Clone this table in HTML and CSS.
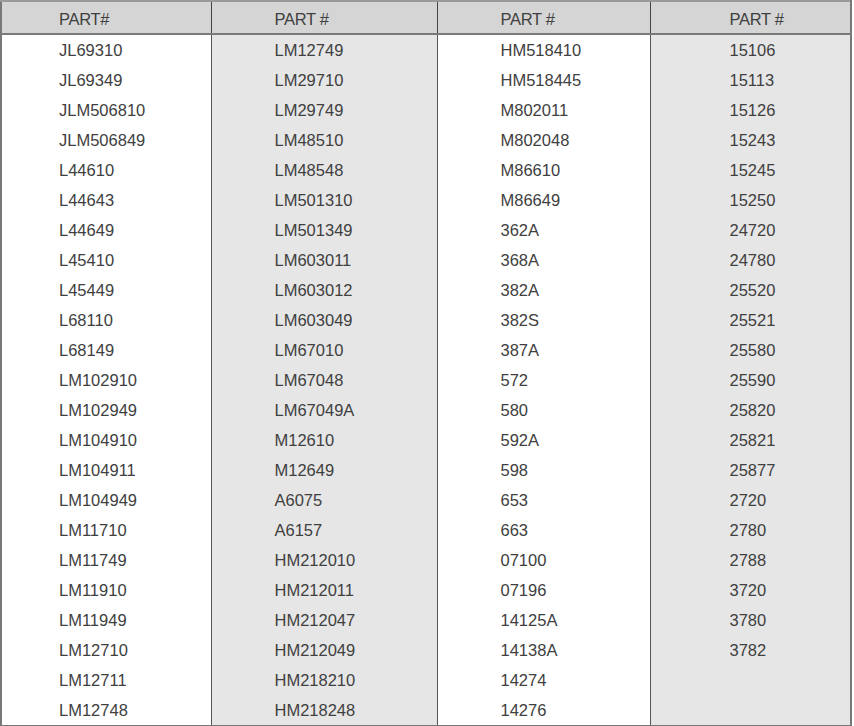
FILE: index.html
```html
<!DOCTYPE html>
<html>
<head>
<meta charset="utf-8">
<link rel="stylesheet" href="styles.css">
</head>
<body>
<table class="parts">
<colgroup>
<col class="c1"><col class="c2"><col class="c3"><col class="c4">
</colgroup>
<thead>
<tr><th class="p1">PART#</th><th class="p2">PART #</th><th class="p3">PART #</th><th class="p4">PART #</th></tr>
</thead>
<tbody>
<tr><td class="p1">JL69310</td><td class="p2 g">LM12749</td><td class="p3">HM518410</td><td class="p4 g">15106</td></tr>
<tr><td class="p1">JL69349</td><td class="p2 g">LM29710</td><td class="p3">HM518445</td><td class="p4 g">15113</td></tr>
<tr><td class="p1">JLM506810</td><td class="p2 g">LM29749</td><td class="p3">M802011</td><td class="p4 g">15126</td></tr>
<tr><td class="p1">JLM506849</td><td class="p2 g">LM48510</td><td class="p3">M802048</td><td class="p4 g">15243</td></tr>
<tr><td class="p1">L44610</td><td class="p2 g">LM48548</td><td class="p3">M86610</td><td class="p4 g">15245</td></tr>
<tr><td class="p1">L44643</td><td class="p2 g">LM501310</td><td class="p3">M86649</td><td class="p4 g">15250</td></tr>
<tr><td class="p1">L44649</td><td class="p2 g">LM501349</td><td class="p3">362A</td><td class="p4 g">24720</td></tr>
<tr><td class="p1">L45410</td><td class="p2 g">LM603011</td><td class="p3">368A</td><td class="p4 g">24780</td></tr>
<tr><td class="p1">L45449</td><td class="p2 g">LM603012</td><td class="p3">382A</td><td class="p4 g">25520</td></tr>
<tr><td class="p1">L68110</td><td class="p2 g">LM603049</td><td class="p3">382S</td><td class="p4 g">25521</td></tr>
<tr><td class="p1">L68149</td><td class="p2 g">LM67010</td><td class="p3">387A</td><td class="p4 g">25580</td></tr>
<tr><td class="p1">LM102910</td><td class="p2 g">LM67048</td><td class="p3">572</td><td class="p4 g">25590</td></tr>
<tr><td class="p1">LM102949</td><td class="p2 g">LM67049A</td><td class="p3">580</td><td class="p4 g">25820</td></tr>
<tr><td class="p1">LM104910</td><td class="p2 g">M12610</td><td class="p3">592A</td><td class="p4 g">25821</td></tr>
<tr><td class="p1">LM104911</td><td class="p2 g">M12649</td><td class="p3">598</td><td class="p4 g">25877</td></tr>
<tr><td class="p1">LM104949</td><td class="p2 g">A6075</td><td class="p3">653</td><td class="p4 g">2720</td></tr>
<tr><td class="p1">LM11710</td><td class="p2 g">A6157</td><td class="p3">663</td><td class="p4 g">2780</td></tr>
<tr><td class="p1">LM11749</td><td class="p2 g">HM212010</td><td class="p3">07100</td><td class="p4 g">2788</td></tr>
<tr><td class="p1">LM11910</td><td class="p2 g">HM212011</td><td class="p3">07196</td><td class="p4 g">3720</td></tr>
<tr><td class="p1">LM11949</td><td class="p2 g">HM212047</td><td class="p3">14125A</td><td class="p4 g">3780</td></tr>
<tr><td class="p1">LM12710</td><td class="p2 g">HM212049</td><td class="p3">14138A</td><td class="p4 g">3782</td></tr>
<tr><td class="p1">LM12711</td><td class="p2 g">HM218210</td><td class="p3">14274</td><td class="p4 g"></td></tr>
<tr><td class="p1">LM12748</td><td class="p2 g">HM218248</td><td class="p3">14276</td><td class="p4 g"></td></tr>
</tbody>
</table>
</body>
</html>
```

FILE: styles.css
```css
html, body {
  margin: 0;
  padding: 0;
  background: #ffffff;
}

.parts {
  border-collapse: collapse;
  table-layout: fixed;
  width: 852px;
  font-family: "Liberation Sans", Arial, sans-serif;
  color: #404040;
  border: 2px solid #777777;
  border-top: 2px solid #9a9a9a;
}

.c1 { width: 210px; }
.c2 { width: 226px; }
.c3 { width: 213px; }
.c4 { width: 201px; }

.parts th {
  background: #d5d5d5;
  height: 28px;
  padding: 0;
  padding-top: 3px;
  text-align: left;
  font-weight: normal;
  font-size: 16.5px;
  letter-spacing: -0.3px;
  border-bottom: 2px solid #7a7a7a;
  border-left: 1px solid #444444;
}

.parts td {
  height: 30px;
  padding: 0;
  font-size: 16.5px;
  text-align: left;
  vertical-align: middle;
  border-left: 1px solid #555555;
}

.p1 { padding-left: 57px !important; }
.p2 { padding-left: 63px !important; }
.p3 { padding-left: 63px !important; }
.p4 { padding-left: 79px !important; }

.g {
  background: #e6e6e6;
}
```
